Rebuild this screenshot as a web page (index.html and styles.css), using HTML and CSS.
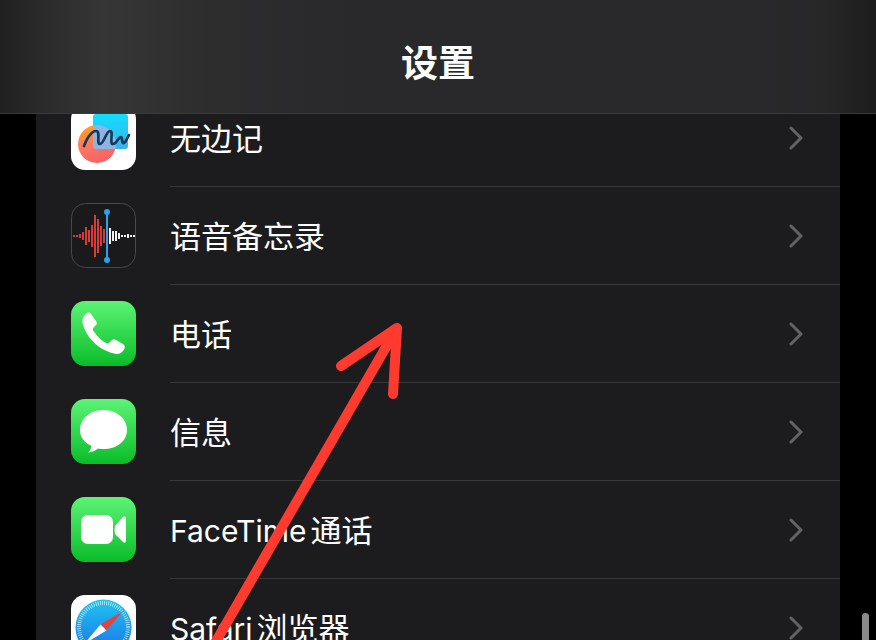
FILE: index.html
```html
<!DOCTYPE html>
<html lang="zh-CN">
<head>
<meta charset="utf-8">
<meta name="viewport" content="width=device-width, initial-scale=1">
<title>设置</title>
<link rel="stylesheet" href="styles.css">
</head>
<body>
<header class="navbar"><h1 class="title">设置</h1></header>
<main class="content">
<ul class="list">
  <li class="item"><a class="row" href="#freeform">
    <svg class="icon" viewBox="0 0 65 65" aria-hidden="true">
      <defs>
        <linearGradient id="ball" x1="0" y1="0" x2="0.3" y2="1"><stop offset="0.1" stop-color="#ffa126"/><stop offset="0.6" stop-color="#ff7560"/><stop offset="1" stop-color="#f96466"/></linearGradient>
        <linearGradient id="note" x1="0" y1="0" x2="0" y2="1"><stop offset="0" stop-color="#13dffb"/><stop offset="1" stop-color="#3cb0ed"/></linearGradient>
        <clipPath id="noteClip"><rect x="22" y="9" width="35" height="35" rx="3"/></clipPath>
      </defs>
      <rect width="65" height="65" rx="14" fill="#fff"/>
      <circle cx="26" cy="39" r="19" fill="url(#ball)"/>
      <rect x="22" y="9" width="35" height="35" rx="3" fill="url(#note)"/>
      <circle cx="26" cy="39" r="19" fill="#8fb4e2" clip-path="url(#noteClip)"/>
      <path d="M13 41C15 35 20 26 25 26C30 26 25 39 29 39C33 39 35 26 39 26C43 26 38 39 42 39C46 39 47 32 50 32C52 32 50 39 53 38C55 37 56 33 58 30" fill="none" stroke="#123b5c" stroke-width="2.700" stroke-linecap="round" stroke-linejoin="round"/>
    </svg>
    <span class="label">无边记</span>
    <svg class="chevron" viewBox="0 0 14 24" aria-hidden="true"><path d="M2 2L12 12L2 22"/></svg>
  </a></li>
  <li class="item"><a class="row" href="#voice-memos">
    <svg class="icon" viewBox="0 0 65 65" aria-hidden="true">
      <rect x="0.5" y="0.5" width="64" height="64" rx="14" fill="#1a1a1c" stroke="#49494b"/>
      <path d="M3 32V34M6 32V34M9 31V35M12 29V37M15 24V42M18 27V39M21 22V44M24 12V54M27 16V50M30 23V43M33 26V40" fill="none" stroke="#d83b37" stroke-width="2"/>
      <path d="M39 25V41M42 28V38M45 28V38M48 30V36M51 32V34M54 32V34M57 31V35M60 32V34M63 32V34" fill="none" stroke="#f2f2f2" stroke-width="2"/>
      <path d="M36 9V57" stroke="#27a3ef" stroke-width="2"/>
      <circle cx="36" cy="9" r="3" fill="#27a3ef"/><circle cx="36" cy="57" r="3" fill="#27a3ef"/>
    </svg>
    <span class="label">语音备忘录</span>
    <svg class="chevron" viewBox="0 0 14 24" aria-hidden="true"><path d="M2 2L12 12L2 22"/></svg>
  </a></li>
  <li class="item"><a class="row" href="#phone">
    <svg class="icon" viewBox="0 0 65 65" aria-hidden="true">
      <defs><linearGradient id="green" x1="0" y1="0" x2="0" y2="1"><stop offset="0" stop-color="#5cf475"/><stop offset="1" stop-color="#0abc29"/></linearGradient></defs>
      <rect width="65" height="65" rx="14" fill="url(#green)"/>
      <path d="M13 15C15 12 18 10 20 13L25 20C27 23 25 24 23 26C21 28 22 30 24 32C28 37 31 40 35 42C37 43 38 42 40 40C42 38 43 38 45 39L52 43C55 45 54 48 51 51C48 54 43 53 38 51C27 47 18 38 14 29C12 24 10 19 13 15Z" fill="#fff"/>
    </svg>
    <span class="label">电话</span>
    <svg class="chevron" viewBox="0 0 14 24" aria-hidden="true"><path d="M2 2L12 12L2 22"/></svg>
  </a></li>
  <li class="item"><a class="row" href="#messages">
    <svg class="icon" viewBox="0 0 65 65" aria-hidden="true">
      <rect width="65" height="65" rx="14" fill="url(#green)"/>
      <path d="M32.500 11C45.500 11 56 19.500 56 31C56 42.500 45.500 50 32.500 50Q29.500 50 27 49.500Q23 53 17 53.500Q20 51 20.500 47C13 43.500 9 38 9 31C9 19.500 19.500 11 32.500 11Z" fill="#fff"/>
    </svg>
    <span class="label">信息</span>
    <svg class="chevron" viewBox="0 0 14 24" aria-hidden="true"><path d="M2 2L12 12L2 22"/></svg>
  </a></li>
  <li class="item"><a class="row" href="#facetime">
    <svg class="icon" viewBox="0 0 65 65" aria-hidden="true">
      <rect width="65" height="65" rx="14" fill="url(#green)"/>
      <rect x="10" y="18" width="32" height="29" rx="7" fill="#fff"/>
      <path d="M44 29L52 20Q55 18 55 22V43Q55 47 52 45L44 37Q43 33 44 29Z" fill="#fff"/>
    </svg>
    <span class="label"><span class="latin">FaceTime</span>通话</span>
    <svg class="chevron" viewBox="0 0 14 24" aria-hidden="true"><path d="M2 2L12 12L2 22"/></svg>
  </a></li>
  <li class="item"><a class="row" href="#safari">
    <svg class="icon" viewBox="0 0 65 65" aria-hidden="true">
      <defs><linearGradient id="sky" x1="0" y1="0" x2="0" y2="1"><stop offset="0" stop-color="#1fc5f0"/><stop offset="1" stop-color="#1d6fe8"/></linearGradient></defs>
      <rect width="65" height="65" rx="14" fill="#fff"/>
      <circle cx="32.500" cy="32.500" r="28" fill="url(#sky)"/>
      <circle cx="32.500" cy="32.500" r="24.500" fill="none" stroke="#d6f1fc" stroke-width="4" stroke-dasharray="0.700 1.438"/>
      <path d="M52 16L29.500 29.500L35.500 35.500Z" fill="#e8413d"/>
      <path d="M13 49L29.500 29.500L35.500 35.500Z" fill="#fff"/>
    </svg>
    <span class="label"><span class="latin">Safari</span>浏览器</span>
    <svg class="chevron" viewBox="0 0 14 24" aria-hidden="true"><path d="M2 2L12 12L2 22"/></svg>
  </a></li>
</ul>
</main>
<svg class="arrow" viewBox="0 0 200 330" aria-hidden="true"><path d="M1 330L187 8M131 46L187 8L183 74"/></svg>
<div class="scroll-thumb"></div>
</body>
</html>
```

FILE: styles.css
```css
* {
  box-sizing: border-box;
}

body {
  position: relative;
  display: flex;
  flex-direction: column;
  height: 100vh;
  margin: 0;
  overflow: hidden;
  background: #000;
  color: #fff;
  font-family: Inter, "Noto Sans CJK SC", sans-serif;
}

.navbar {
  flex: none;
  padding: 36px 16px 21px;
  border-bottom: 1px solid #3a3a3c;
  background: linear-gradient(90deg, #202021 0%, #2b2b2c 5%, #363636 12%, #333334 16%, #2d2d2e 24%, #29292b 40%, #29292b 86%, #272728 94%, #1d1d1e 100%);
  text-align: center;
}

.title {
  margin: 0;
  font-size: 37px;
  font-weight: 600;
  line-height: 56px;
}

.content {
  flex: 1;
  min-height: 0;
  padding: 0 36px;
  overflow: hidden;
}

.list {
  margin: -25px 0 0;
  padding: 0;
  background: #1c1c1e;
  list-style: none;
}

.item {
  background: linear-gradient(#38383a, #38383a) 134px 100% / 100% 1px no-repeat;
}

.row {
  display: flex;
  align-items: center;
  gap: 34px;
  height: 98px;
  padding: 0 37px 0 35px;
  color: inherit;
  text-decoration: none;
}

.icon {
  flex: none;
  width: 65px;
  height: 65px;
  margin-bottom: 1px;
}

.label {
  flex: 1;
  padding-top: 2px;
  font-size: 31px;
  line-height: 96px;
}

.latin {
  margin-right: 4px;
  font-size: 30px;
}

.chevron {
  flex: none;
  width: 14px;
  height: 24px;
}

.chevron path {
  fill: none;
  stroke: #636366;
  stroke-width: 3;
  stroke-linecap: round;
  stroke-linejoin: round;
}

.arrow {
  position: absolute;
  top: 320px;
  left: 210px;
  width: 200px;
  height: 330px;
  pointer-events: none;
}

.arrow path {
  fill: none;
  stroke: #ff3b30;
  stroke-width: 10;
  stroke-linecap: round;
  stroke-linejoin: round;
}

.scroll-thumb {
  position: absolute;
  top: 613px;
  right: 7px;
  bottom: -8px;
  width: 7px;
  border-radius: 4px;
  background: #8a8a8a;
}
```
